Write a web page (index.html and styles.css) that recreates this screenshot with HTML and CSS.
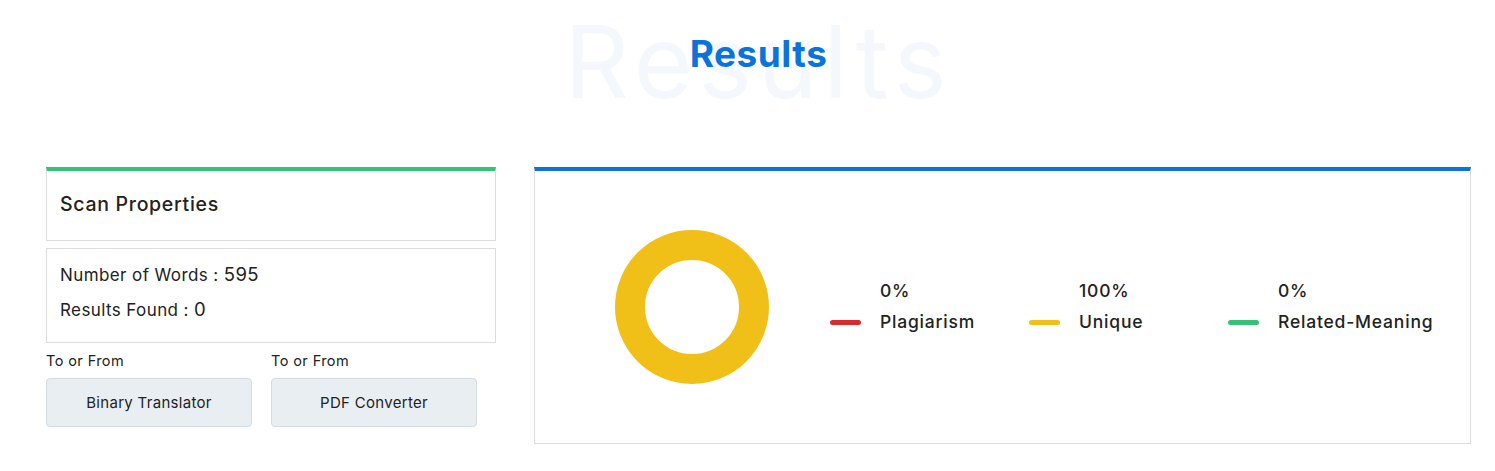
FILE: index.html
```html
<!DOCTYPE html>
<html>
<head>
<meta charset="utf-8">
<link rel="stylesheet" href="styles.css">
</head>
<body>
<div class="page">
  <header class="head">
    <div class="ghost" aria-hidden="true">Results</div>
    <h1 class="title">Results</h1>
  </header>
  <main class="grid">
    <section class="left">
      <div class="box box-top">
        <h2 class="box-title">Scan Properties</h2>
      </div>
      <div class="box box-stats">
        <p class="stat">Number of Words : <span class="num">595</span></p>
        <p class="stat">Results Found : <span class="num">0</span></p>
      </div>
      <div class="links">
        <div class="link">
          <div class="link-label">To or From</div>
          <a class="btn">Binary Translator</a>
        </div>
        <div class="link">
          <div class="link-label">To or From</div>
          <a class="btn">PDF Converter</a>
        </div>
      </div>
    </section>
    <section class="right">
      <div class="chart">
        <svg class="donut" width="156" height="156" viewBox="0 0 156 156">
          <circle cx="78" cy="78" r="62" fill="none" stroke="#f0c019" stroke-width="30"/>
        </svg>
      </div>
      <div class="legend">
        <div class="item">
          <span class="dash red"></span>
          <div class="item-text"><div class="pct">0%</div><div class="lbl">Plagiarism</div></div>
        </div>
        <div class="item">
          <span class="dash yellow"></span>
          <div class="item-text"><div class="pct">100%</div><div class="lbl">Unique</div></div>
        </div>
        <div class="item">
          <span class="dash green"></span>
          <div class="item-text"><div class="pct">0%</div><div class="lbl">Related-Meaning</div></div>
        </div>
      </div>
    </section>
  </main>
</div>
</body>
</html>
```

FILE: styles.css
```css
* { box-sizing: border-box; }
body {
  margin: 0;
  background: #fff;
  font-family: "Inter", "Open Sans", sans-serif;
  color: #222;
}
.page { padding: 0 24px 0 46px; }
.head {
  position: relative;
  height: 167px;
  text-align: center;
}
.ghost {
  position: absolute;
  left: 0; right: 0; top: 1px;
  font-size: 101px;
  font-weight: 400;
  color: #f4f8fd;
  letter-spacing: 6px;
  line-height: 1.2;
}
.title {
  position: relative;
  margin: 0;
  padding-top: 32px;
  font-size: 37px;
  font-weight: 700;
  color: #0a74da;
  line-height: 44px;
  letter-spacing: 0.5px;
}
.grid {
  display: grid;
  grid-template-columns: 450px 937px;
  column-gap: 38px;
  align-items: start;
}
.box { border: 1px solid #dcdcdc; background: #fff; }
.box-top {
  border-top: 4px solid #35c276;
  height: 74px;
  display: flex;
  align-items: center;
  padding-left: 13px;
  padding-bottom: 3px;
}
.box-title { margin: 0; font-size: 19.5px; font-weight: 500; letter-spacing: 0.7px; }
.box-stats {
  margin-top: 7px;
  height: 95px;
  padding: 8px 13px;
}
.stat { margin: 0; font-size: 17px; line-height: 34px; letter-spacing: 0.4px; }
.num { font-size: 18.5px; }
.links {
  display: flex;
  gap: 19px;
  margin-top: 8px;
}
.link { width: 206px; }
.link-label { font-size: 14.5px; line-height: 20px; margin-bottom: 7px; letter-spacing: 0.4px; }
.btn {
  display: flex;
  align-items: center;
  justify-content: center;
  height: 49px;
  background: #e9eef3;
  border: 1px solid #d3dbe3;
  border-radius: 4px;
  font-size: 15px;
  font-weight: 400;
  letter-spacing: 0.3px;
  color: #222;
}
.right {
  border: 1px solid #dcdcdc;
  border-top: 4px solid #0a74da;
  height: 277px;
  display: flex;
  align-items: center;
  padding-left: 79px;
}
.chart { width: 156px; height: 156px; margin-bottom: 1px; flex: none; }
.donut { display: block; }
.legend {
  display: flex;
  margin-left: 60px;
  margin-bottom: 3px;
}
.item {
  flex: none;
  width: 199px;
  display: flex;
  align-items: flex-end;
  white-space: nowrap;
}
.dash {
  flex: none;
  width: 31px;
  height: 5px;
  border-radius: 3px;
  margin-right: 19px;
  margin-bottom: 12px;
}
.red { background: #d92b2b; }
.yellow { background: #f0c019; }
.green { background: #35c276; }
.pct, .lbl { font-size: 17.5px; font-weight: 500; line-height: 31px; letter-spacing: 0.8px; }
```
